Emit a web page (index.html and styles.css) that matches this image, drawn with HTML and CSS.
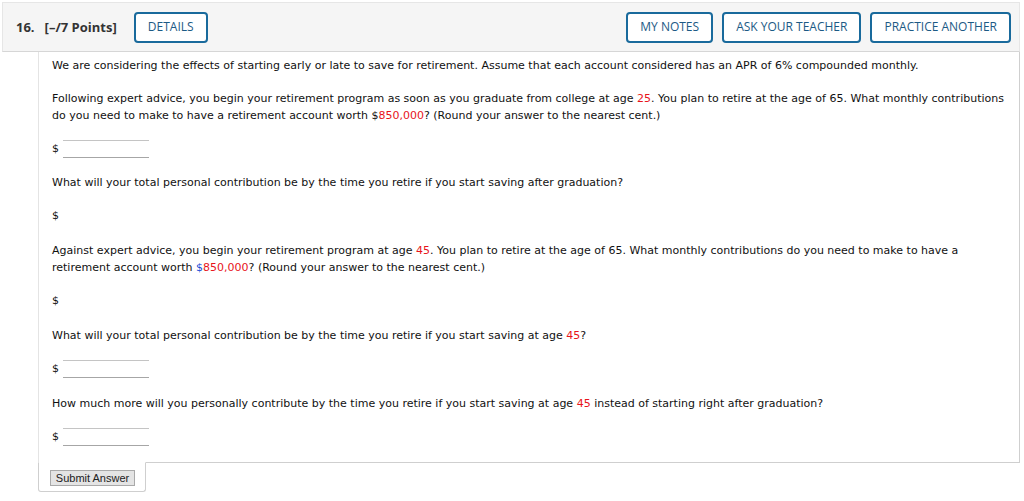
FILE: index.html
```html
<!DOCTYPE html>
<html>
<head>
<meta charset="utf-8">
<link rel="stylesheet" href="styles.css">
</head>
<body>
<div class="question">
  <div class="qhead">
    <span class="qnum">16.</span>
    <span class="qpts">[–/7 Points]</span>
    <button class="hbtn details">DETAILS</button>
    <div class="spacer"></div>
    <button class="hbtn">MY NOTES</button>
    <button class="hbtn">ASK YOUR TEACHER</button>
    <button class="hbtn">PRACTICE ANOTHER</button>
  </div>
  <div class="qbody">
    <p>We are considering the effects of starting early or late to save for retirement. Assume that each account considered has an APR of 6% compounded monthly.</p>
    <p>Following expert advice, you begin your retirement program as soon as you graduate from college at age <span class="red">25</span>. You plan to retire at the age of 65. What monthly contributions do you need to make to have a retirement account worth $<span class="red">850,000</span>? (Round your answer to the nearest cent.)</p>
    <div class="ans first">$ <span class="field"></span></div>
    <p>What will your total personal contribution be by the time you retire if you start saving after graduation?</p>
    <div class="ans">$</div>
    <p>Against expert advice, you begin your retirement program at age <span class="red">45</span>. You plan to retire at the age of 65. What monthly contributions do you need to make to have a retirement account worth <span class="blue">$</span><span class="red">850,000</span>? (Round your answer to the nearest cent.)</p>
    <div class="ans">$</div>
    <p>What will your total personal contribution be by the time you retire if you start saving at age <span class="red">45</span>?</p>
    <div class="ans">$ <span class="field"></span></div>
    <p>How much more will you personally contribute by the time you retire if you start saving at age <span class="red">45</span> instead of starting right after graduation?</p>
    <div class="ans last">$ <span class="field"></span></div>
  </div>
  <div class="submit-tab"><button class="submit">Submit Answer</button></div>
</div>
</body>
</html>
```
FILE: styles.css
```css
html, body {
  margin: 0;
  padding: 0;
  background: #ffffff;
}
.question {
  padding: 2px 4px 0 2px;
}
.qhead {
  display: flex;
  align-items: center;
  height: 48px;
  background: #f5f5f5;
  border: 1px solid #e6e6e6;
  border-bottom: 1px solid #d6d6d6;
  padding: 0 8px 0 13px;
  font-family: "Open Sans", sans-serif;
}
.qnum {
  font-weight: 700;
  font-size: 13px;
  color: #333;
  margin-right: 10px;
}
.qpts {
  font-weight: 700;
  font-size: 13px;
  color: #333;
  margin-right: 17px;
}
.spacer { flex: 1; }
.hbtn {
  font-family: "Open Sans", sans-serif;
  font-size: 12px;
  color: #1c5a85;
  background: #fff;
  border: 2px solid #196a9c;
  border-radius: 4px;
  height: 31px;
  padding: 0 12px;
  margin-left: 9px;
  line-height: 1;
}
.details {
  margin-left: 0;
  width: 74px;
  padding: 0;
}
.qbody {
  margin-left: 36px;
  border-left: 1px solid #e4e4e4;
  border-right: 1px solid #cfcfcf;
  border-bottom: 1px solid #cfcfcf;
  padding: 5px 10px 7px 13px;
  font-family: "DejaVu Sans", Verdana, sans-serif;
  font-size: 11px;
  line-height: 17px;
  color: #111;
}
.qbody p {
  margin: 0 0 16px 0;
}
.red { color: #e8141b; }
.blue { color: #1a4fd6; }
.ans {
  height: 18px;
  line-height: 18px;
  margin: 0 0 17px 0;
  display: flex;
  align-items: center;
}
.ans.first { margin-bottom: 16px; }
.ans.last { margin-bottom: 9px; }
.field {
  display: inline-block;
  width: 86px;
  height: 16px;
  border-top: 1px solid #c4c4c4;
  border-bottom: 1px solid #a6a6a6;
  margin-left: 4px;
}
.submit-tab {
  width: 108px;
  height: 30px;
  margin-left: 36px;
  margin-top: -1px;
  background: #fff;
  border: 1px solid #cfcfcf;
  border-top: 1px solid #fff;
  border-radius: 0 0 3px 3px;
  box-sizing: border-box;
  padding: 7px 0 0 11px;
}
.submit {
  display: block;
  font-family: "Liberation Sans", Arial, sans-serif;
  font-size: 11px;
  color: #222;
  background: #e4e4e4;
  border: 1px solid #a9a9a9;
  height: 16px;
  width: 85px;
  padding: 0;
  line-height: 14px;
}
```
